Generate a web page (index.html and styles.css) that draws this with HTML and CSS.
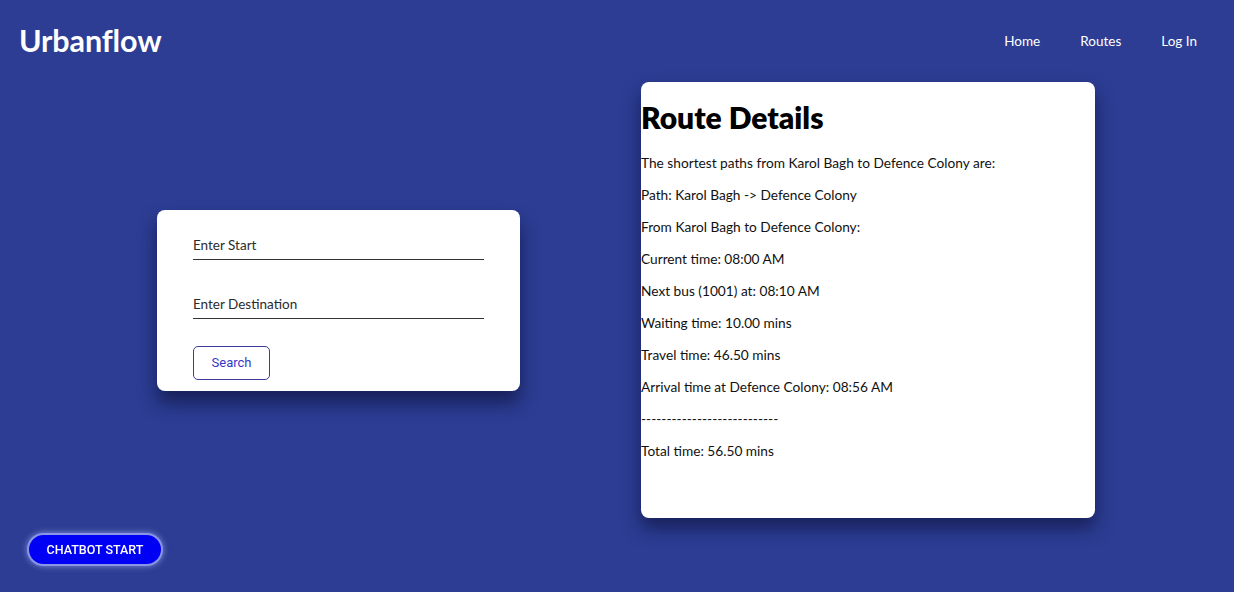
FILE: index.html
```html
<!DOCTYPE html>
<html lang="en">
<head>
<meta charset="utf-8">
<title>Urbanflow</title>
<link rel="stylesheet" href="styles.css">
</head>
<body>
<header class="topbar">
  <div class="logo">Urbanflow</div>
  <nav class="nav">
    <a href="#" class="nav-link">Home</a>
    <a href="#" class="nav-link">Routes</a>
    <a href="#" class="nav-link">Log In</a>
  </nav>
</header>
<main class="main">
  <form class="search-card">
    <input class="field" type="text" placeholder="Enter Start">
    <input class="field" type="text" placeholder="Enter Destination">
    <button class="search-btn" type="button">Search</button>
  </form>
  <section class="route-card">
    <h2 class="route-title">Route Details</h2>
    <p class="line">The shortest paths from Karol Bagh to Defence Colony are:</p>
    <p class="line">Path: Karol Bagh -&gt; Defence Colony</p>
    <p class="line">From Karol Bagh to Defence Colony:</p>
    <p class="line">Current time: 08:00 AM</p>
    <p class="line">Next bus (1001) at: 08:10 AM</p>
    <p class="line">Waiting time: 10.00 mins</p>
    <p class="line">Travel time: 46.50 mins</p>
    <p class="line">Arrival time at Defence Colony: 08:56 AM</p>
    <p class="line">---------------------------</p>
    <p class="line">Total time: 56.50 mins</p>
  </section>
</main>
<button class="chatbot-btn" type="button">CHATBOT START</button>
</body>
</html>
```
FILE: styles.css
```css
* { box-sizing: border-box; }
html, body { height: 100%; }
body {
  margin: 0;
  background: #2c3d93;
  font-family: "Lato", "Open Sans", sans-serif;
  color: #111;
  overflow: hidden;
}
.topbar {
  height: 82px;
  display: flex;
  align-items: center;
  justify-content: space-between;
  padding: 0 37px 2px 19px;
}
.logo {
  color: #fff;
  font-weight: 700;
  font-size: 30.5px;
  letter-spacing: -0.1px;
}
.nav {
  display: flex;
  gap: 40px;
  padding-top: 1px;
}
.nav-link {
  color: #fff;
  text-decoration: none;
  font-size: 13.5px;
}
.main {
  display: flex;
  align-items: center;
  padding-left: 157px;
  gap: 121px;
}
.search-card {
  width: 363px;
  background: #fff;
  border-radius: 8px;
  padding: 28px 36px 11px;
  display: flex;
  flex-direction: column;
  align-items: flex-start;
  box-shadow: 0 12px 18px rgba(10, 14, 50, 0.6);
}
.field {
  width: 291px;
  height: 22px;
  border: none;
  border-bottom: 1px solid #333;
  padding: 0 0 6px;
  font-family: "Lato", sans-serif;
  font-size: 13.5px;
  color: #222;
  outline: none;
  background: transparent;
}
.field::placeholder { color: #2b2b2b; }
.field + .field { margin-top: 37px; }
.search-btn {
  margin-top: 27px;
  width: 77px;
  height: 34px;
  background: #fff;
  border: 1px solid #3b3b9a;
  border-radius: 5px;
  color: #3838c8;
  font-family: "Roboto", "Liberation Sans", sans-serif;
  font-size: 13px;
}
.route-card {
  width: 454px;
  height: 436px;
  background: #fff;
  border-radius: 8px;
  box-shadow: 0 10px 18px rgba(10, 14, 50, 0.6);
}
.route-title {
  margin: 18px 0 20px;
  font-size: 30px;
  line-height: 34px;
  font-weight: 800;
  color: #000;
}
.line {
  margin: 0 0 14px;
  font-size: 13.7px;
  line-height: 18px;
  color: #111;
}
.chatbot-btn {
  position: fixed;
  left: 27px;
  bottom: 26px;
  width: 136px;
  height: 33px;
  border-radius: 17px;
  background: #0000f5;
  border: 2px solid #8a95e8;
  box-shadow: 0 0 6px rgba(170, 180, 255, 0.7);
  color: #fff;
  font-family: "Roboto", "Liberation Sans", sans-serif;
  font-weight: 500;
  font-size: 12.5px;
}
```
